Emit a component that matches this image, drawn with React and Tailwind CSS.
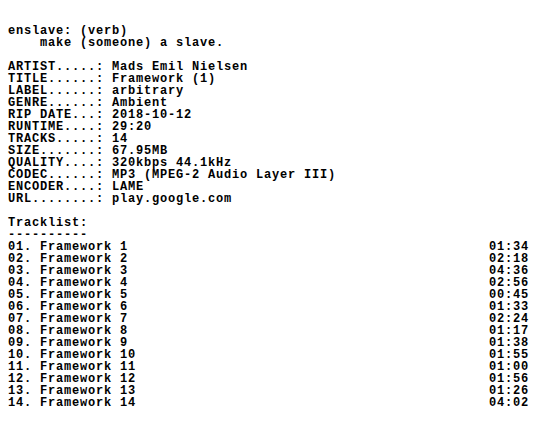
const info = [
  ["ARTIST.....", "Mads Emil Nielsen"],
  ["TITLE......", "Framework (1)"],
  ["LABEL......", "arbitrary"],
  ["GENRE......", "Ambient"],
  ["RIP DATE...", "2018-10-12"],
  ["RUNTIME....", "29:20"],
  ["TRACKS.....", "14"],
  ["SIZE.......", "67.95MB"],
  ["QUALITY....", "320kbps 44.1kHz"],
  ["CODEC......", "MP3 (MPEG-2 Audio Layer III)"],
  ["ENCODER....", "LAME"],
  ["URL........", "play.google.com"],
];

const tracks = [
  "01:34", "02:18", "04:36", "02:56", "00:45", "01:33", "02:24",
  "01:17", "01:38", "01:55", "01:00", "01:56", "01:26", "04:02",
];

export default function App() {
  return (
    <div className="w-[536px] h-[432px] bg-white text-black pl-2 pr-[7px] pt-[25px] font-['Liberation_Mono',monospace] font-bold text-[12px] tracking-[0.8px] leading-[12px] whitespace-pre">
      <div>enslave: (verb)</div>
      <div>{"    make (someone) a slave."}</div>
      <div className="h-[12px]" />
      {info.map(([k, v]) => (
        <div key={k}>{k}: {v}</div>
      ))}
      <div className="h-[12px]" />
      <div>Tracklist:</div>
      <div>----------</div>
      {tracks.map((t, i) => {
        const n = String(i + 1).padStart(2, "0");
        return (
          <div key={n} className="flex justify-between">
            <span>{n}. Framework {i + 1}</span>
            <span>{t}</span>
          </div>
        );
      })}
    </div>
  );
}
